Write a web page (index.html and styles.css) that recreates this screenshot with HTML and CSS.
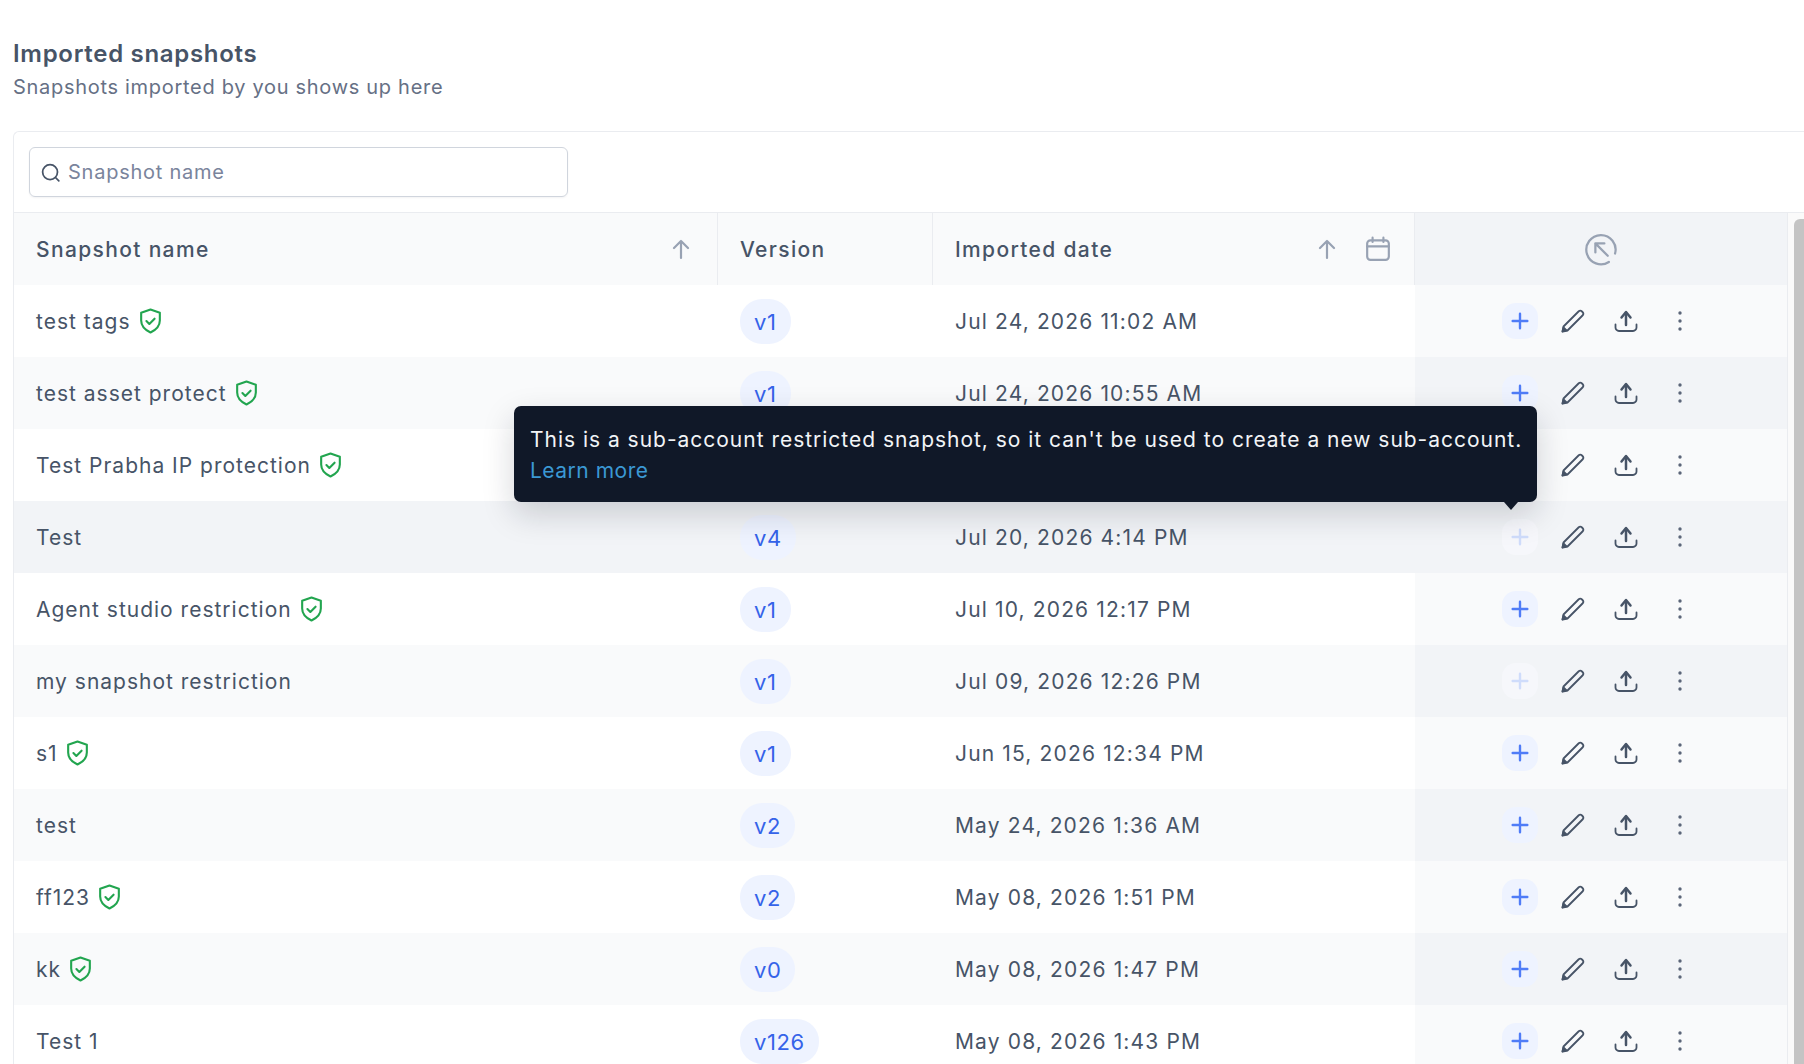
FILE: index.html
```html
<!DOCTYPE html>
<html lang="en">
<head>
    <meta charset="UTF-8">
    <title>Imported snapshots</title>
    <link rel="stylesheet" href="styles.css">
</head>
<body>
    <svg class="sprite" width="0" height="0">
        <symbol id="i-shield" viewBox="3 1 18 22"><path d="M12 2.200l8 2.800v6.500c0 4.800-3.200 8-8 10.300-4.800-2.300-8-5.500-8-10.300V5z"/><path d="M8.500 12l2.500 2.500 4.500-4.500"/></symbol>
        <symbol id="i-plus" viewBox="0 0 24 24"><path d="M12 4v16M4 12h16"/></symbol>
        <symbol id="i-pencil" viewBox="0 0 24 24"><path d="M1.500 22.500l1-5L17.500 2.500a2.500 2.500 0 0 1 3.500 0l.5.500a2.500 2.500 0 0 1 0 3.500L6.500 21.500z"/><path d="M1.500 22.500l1-4 3 3z" class="fill"/></symbol>
        <symbol id="i-upload" viewBox="0 0 24 24"><path d="M12 16V4" class="bold"/><path d="M7.500 8.500L12 3l4.500 5.500" class="bold"/><path d="M1.500 15.500v3a3.500 3.500 0 0 0 3.500 3.500h14a3.500 3.500 0 0 0 3.500-3.500v-3"/></symbol>
        <symbol id="i-dots" viewBox="0 0 24 24"><circle cx="12" cy="4" r="1.700"/><circle cx="12" cy="12" r="1.700"/><circle cx="12" cy="20" r="1.700"/></symbol>
        <symbol id="i-up" viewBox="0 0 24 24"><path d="M12 21V4M5 11l7-7 7 7"/></symbol>
    </svg>

    <div class="page">
        <h1 class="title">Imported snapshots</h1>
        <p class="subtitle">Snapshots imported by you shows up here</p>

        <div class="card">
            <div class="toolbar">
                <div class="search">
                    <svg class="search-icon" viewBox="0 0 24 24"><circle cx="11.500" cy="11.500" r="8.500"/><path d="M18 18l3.500 3.500"/></svg>
                    <span>Snapshot name</span>
                </div>
            </div>

            <div class="table-wrap">
                <div class="table">
                    <div class="row head">
                        <div class="cell">Snapshot name<svg class="head-icon"><use href="#i-up"/></svg></div>
                        <div class="cell">Version</div>
                        <div class="cell">Imported date
                            <span class="head-icons">
                                <svg class="head-icon"><use href="#i-up"/></svg>
                                <svg class="head-icon cal" viewBox="0 0 24 24"><rect x="2" y="4" width="20" height="18" rx="3"/><path d="M2 9.500h20M7 1.500v4M17 1.500v4"/></svg>
                            </span>
                        </div>
                        <div class="cell actions-head">
                            <svg class="exit-icon" viewBox="0 0 32 32"><path d="M23 27.500A13 13 0 1 1 28.500 20"/><path d="M11 11l11 11M11 19v-8h8"/></svg>
                        </div>
                    </div>

                    <div class="row">
                        <div class="cell">test tags<svg class="shield"><use href="#i-shield"/></svg></div>
                        <div class="cell"><span class="pill">v1</span></div>
                        <div class="cell">Jul 24, 2026 11:02 AM</div>
                        <div class="cell actions"><button class="add"><svg><use href="#i-plus"/></svg></button><svg class="act"><use href="#i-pencil"/></svg><svg class="act"><use href="#i-upload"/></svg><svg class="act dots"><use href="#i-dots"/></svg></div>
                    </div>
                    <div class="row alt">
                        <div class="cell">test asset protect<svg class="shield"><use href="#i-shield"/></svg></div>
                        <div class="cell"><span class="pill">v1</span></div>
                        <div class="cell">Jul 24, 2026 10:55 AM</div>
                        <div class="cell actions"><button class="add"><svg><use href="#i-plus"/></svg></button><svg class="act"><use href="#i-pencil"/></svg><svg class="act"><use href="#i-upload"/></svg><svg class="act dots"><use href="#i-dots"/></svg></div>
                    </div>
                    <div class="row">
                        <div class="cell">Test Prabha IP protection<svg class="shield"><use href="#i-shield"/></svg></div>
                        <div class="cell"><span class="pill">v1</span></div>
                        <div class="cell">Jul 22, 2026 3:40 PM</div>
                        <div class="cell actions"><button class="add"><svg><use href="#i-plus"/></svg></button><svg class="act"><use href="#i-pencil"/></svg><svg class="act"><use href="#i-upload"/></svg><svg class="act dots"><use href="#i-dots"/></svg></div>
                    </div>
                    <div class="row hover">
                        <div class="cell">Test</div>
                        <div class="cell"><span class="pill">v4</span></div>
                        <div class="cell">Jul 20, 2026 4:14 PM</div>
                        <div class="cell actions"><button class="add off"><svg><use href="#i-plus"/></svg></button><svg class="act"><use href="#i-pencil"/></svg><svg class="act"><use href="#i-upload"/></svg><svg class="act dots"><use href="#i-dots"/></svg></div>
                    </div>
                    <div class="row">
                        <div class="cell">Agent studio restriction<svg class="shield"><use href="#i-shield"/></svg></div>
                        <div class="cell"><span class="pill">v1</span></div>
                        <div class="cell">Jul 10, 2026 12:17 PM</div>
                        <div class="cell actions"><button class="add"><svg><use href="#i-plus"/></svg></button><svg class="act"><use href="#i-pencil"/></svg><svg class="act"><use href="#i-upload"/></svg><svg class="act dots"><use href="#i-dots"/></svg></div>
                    </div>
                    <div class="row alt">
                        <div class="cell">my snapshot restriction</div>
                        <div class="cell"><span class="pill">v1</span></div>
                        <div class="cell">Jul 09, 2026 12:26 PM</div>
                        <div class="cell actions"><button class="add off"><svg><use href="#i-plus"/></svg></button><svg class="act"><use href="#i-pencil"/></svg><svg class="act"><use href="#i-upload"/></svg><svg class="act dots"><use href="#i-dots"/></svg></div>
                    </div>
                    <div class="row">
                        <div class="cell">s1<svg class="shield"><use href="#i-shield"/></svg></div>
                        <div class="cell"><span class="pill">v1</span></div>
                        <div class="cell">Jun 15, 2026 12:34 PM</div>
                        <div class="cell actions"><button class="add"><svg><use href="#i-plus"/></svg></button><svg class="act"><use href="#i-pencil"/></svg><svg class="act"><use href="#i-upload"/></svg><svg class="act dots"><use href="#i-dots"/></svg></div>
                    </div>
                    <div class="row alt">
                        <div class="cell">test</div>
                        <div class="cell"><span class="pill">v2</span></div>
                        <div class="cell">May 24, 2026 1:36 AM</div>
                        <div class="cell actions"><button class="add"><svg><use href="#i-plus"/></svg></button><svg class="act"><use href="#i-pencil"/></svg><svg class="act"><use href="#i-upload"/></svg><svg class="act dots"><use href="#i-dots"/></svg></div>
                    </div>
                    <div class="row">
                        <div class="cell">ff123<svg class="shield"><use href="#i-shield"/></svg></div>
                        <div class="cell"><span class="pill">v2</span></div>
                        <div class="cell">May 08, 2026 1:51 PM</div>
                        <div class="cell actions"><button class="add"><svg><use href="#i-plus"/></svg></button><svg class="act"><use href="#i-pencil"/></svg><svg class="act"><use href="#i-upload"/></svg><svg class="act dots"><use href="#i-dots"/></svg></div>
                    </div>
                    <div class="row alt">
                        <div class="cell">kk<svg class="shield"><use href="#i-shield"/></svg></div>
                        <div class="cell"><span class="pill">v0</span></div>
                        <div class="cell">May 08, 2026 1:47 PM</div>
                        <div class="cell actions"><button class="add"><svg><use href="#i-plus"/></svg></button><svg class="act"><use href="#i-pencil"/></svg><svg class="act"><use href="#i-upload"/></svg><svg class="act dots"><use href="#i-dots"/></svg></div>
                    </div>
                    <div class="row">
                        <div class="cell">Test 1</div>
                        <div class="cell"><span class="pill">v126</span></div>
                        <div class="cell">May 08, 2026 1:43 PM</div>
                        <div class="cell actions"><button class="add"><svg><use href="#i-plus"/></svg></button><svg class="act"><use href="#i-pencil"/></svg><svg class="act"><use href="#i-upload"/></svg><svg class="act dots"><use href="#i-dots"/></svg></div>
                    </div>
                </div>
                <div class="scrollbar"><div class="thumb"></div></div>
            </div>
        </div>
    </div>

    <!-- Tooltip for the disabled add button -->
    <div class="tooltip">
        <p>This is a sub-account restricted snapshot, so it can't be used to create a new sub-account.</p>
        <a href="#">Learn more</a>
    </div>
</body>
</html>
```

FILE: styles.css
```css
body {
    margin: 0;
    height: 1064px;
    overflow: hidden;
    background-color: #fff;
    font-family: 'Inter', 'Liberation Sans', sans-serif;
    color: #475467;
}

.sprite {
    position: absolute;
}

.page {
    height: 1064px;
    overflow: hidden;
    padding: 39px 0 0 13px;
    box-sizing: border-box;
}

.title {
    margin: 0;
    font-size: 24px;
    line-height: 30px;
    font-weight: 600;
    letter-spacing: 0.7px;
    color: #475467;
}

.subtitle {
    margin: 3px 0 0;
    font-size: 20px;
    line-height: 30px;
    letter-spacing: 0.7px;
    color: #667085;
}

.card {
    margin-top: 29px;
    border: 1px solid #eaecf0;
    border-right: none;
    border-bottom: none;
    border-radius: 6px 0 0 0;
}

.toolbar {
    height: 81px;
    padding: 15px 0 0 15px;
    box-sizing: border-box;
    border-bottom: 1px solid #eaecf0;
}

.search {
    display: flex;
    align-items: center;
    gap: 7px;
    width: 539px;
    height: 50px;
    box-sizing: border-box;
    padding-left: 10px;
    border: 1.5px solid #d0d5dd;
    border-radius: 6px;
    box-shadow: 0 1px 2px rgba(16, 24, 40, 0.05);
    font-size: 20px;
    letter-spacing: 0.75px;
    color: #7a849c;
}

.search-icon {
    width: 21px;
    height: 21px;
    fill: none;
    stroke: #475467;
    stroke-width: 2;
    stroke-linecap: round;
}

.table-wrap {
    display: flex;
}

.table {
    width: 1773px;
    flex: none;
}

.row {
    display: grid;
    grid-template-columns: 704px 215px 482px 372px;
    height: 72px;
    background-color: #fff;
}

.row.alt {
    background-color: #f9fafb;
}

.row.hover {
    background-color: #f2f4f7;
}

.cell {
    display: flex;
    align-items: center;
    padding-left: 22px;
    font-size: 21px;
    letter-spacing: 1.05px;
    color: #475467;
    box-sizing: border-box;
}

.cell:first-child {
    letter-spacing: 1px;
}

.cell:nth-child(3) {
    letter-spacing: 1.15px;
}

.head {
    background-color: #f9fafb;
}

.head .cell {
    position: relative;
    justify-content: space-between;
    padding-right: 24px;
    font-weight: 500;
    letter-spacing: 1.35px;
    color: #475467;
    border-right: 1px solid #eaecf0;
}

.head-icons {
    display: flex;
    align-items: center;
    gap: 26px;
    margin-right: -1px;
}

.head-icon {
    width: 24px;
    height: 24px;
    fill: none;
    stroke: #98a2b3;
    stroke-width: 2.2;
    stroke-linecap: round;
    stroke-linejoin: round;
}

.head-icon.cal {
    width: 26px;
    height: 26px;
    stroke-width: 2;
}

.actions-head {
    justify-content: center !important;
    padding: 0 !important;
    background-color: #f2f4f7;
    border-right: none !important;
}

.exit-icon {
    width: 36px;
    height: 36px;
    fill: none;
    stroke: #98a2b3;
    stroke-width: 2;
    stroke-linecap: round;
    stroke-linejoin: round;
}

.shield {
    width: 21px;
    height: 26px;
    margin-left: 9px;
    fill: none;
    stroke: #22a54f;
    stroke-width: 1.800;
    stroke-linecap: round;
    stroke-linejoin: round;
}

.pill {
    display: inline-block;
    padding: 0 14px;
    height: 45px;
    line-height: 47px;
    border-radius: 22px;
    background-color: #eef3ff;
    color: #3563e9;
    font-size: 22px;
    letter-spacing: 0.6px;
}

.actions {
    gap: 17px;
    padding-left: 87px;
    background-color: #f9fafb;
}

.row.alt .actions,
.row.hover .actions {
    background-color: #f2f4f7;
}

.add {
    width: 36px;
    height: 36px;
    padding: 0;
    border: none;
    border-radius: 14px;
    background-color: #eef3ff;
    display: flex;
    align-items: center;
    justify-content: center;
}

.add svg {
    width: 22px;
    height: 22px;
    fill: none;
    stroke: #4f7cf7;
    stroke-width: 2.600;
    stroke-linecap: round;
}

.add.off {
    background-color: #f6f7fb;
}

.add.off svg {
    stroke: #cfdcfb;
}

.act {
    width: 36px;
    height: 24px;
    fill: none;
    stroke: #475467;
    stroke-width: 1.800;
    stroke-linecap: round;
    stroke-linejoin: round;
}

.fill {
    fill: #475467;
}

.bold {
    stroke-width: 2.500;
}

.dots {
    margin-left: 1px;
    fill: #5b6579;
    stroke: none;
}

.scrollbar {
    flex: 1;
    border-left: 1px solid #eaecf0;
    padding: 6px 0 0 6px;
    height: 900px;
    background-color: #fafafa;
}

.thumb {
    height: 100%;
    border-radius: 6px 0 0 0;
    background-color: #c4c4c4;
}

.tooltip {
    position: absolute;
    top: 406px;
    left: 514px;
    width: 1023px;
    height: 96px;
    box-sizing: border-box;
    padding: 18px 16px 0;
    border-radius: 7px;
    background-color: #101828;
    box-shadow: 0 12px 32px rgba(16, 24, 40, 0.18);
    color: #f2f4f7;
    font-size: 21px;
    letter-spacing: 0.98px;
    line-height: 31px;
}

.tooltip::after {
    content: "";
    position: absolute;
    top: 100%;
    right: 19px;
    border-left: 7px solid transparent;
    border-right: 7px solid transparent;
    border-top: 8px solid #101828;
}

.tooltip p {
    margin: 0;
    white-space: nowrap;
}

.tooltip a {
    color: #3b98d4;
    letter-spacing: 0.5px;
    text-decoration: none;
}
```
